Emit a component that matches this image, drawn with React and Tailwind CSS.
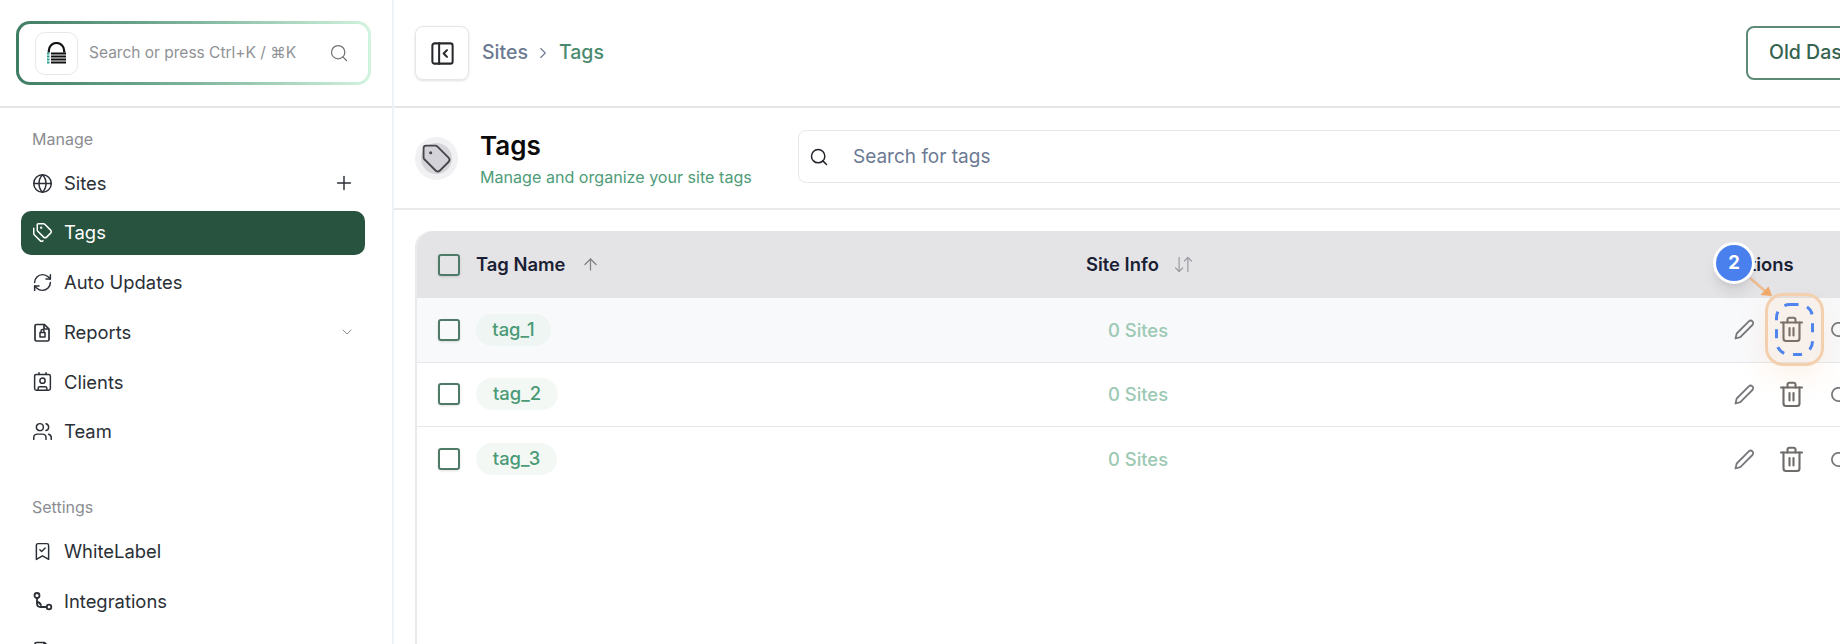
import React from "react";
import { Globe, Plus, Tags, RefreshCw, ChevronDown, Users, Search, ChevronRight, PanelLeftClose, Tag, ArrowUp, ArrowUpDown, Cloud, Contact, BookmarkCheck } from "lucide-react";

const font = { fontFamily: "Inter, sans-serif" };

function ReportIcon({ size = 21 }) {
  return (
    <svg width={size} height={size} viewBox="0 0 21 21" fill="none" stroke="currentColor" strokeWidth="1.7" strokeLinejoin="round">
      <path d="M4.5 2.5h8l4.5 4.5v10.5a1.5 1.5 0 0 1-1.5 1.5h-11A1.5 1.5 0 0 1 3 17.5v-13.500a1.500 1.500 0 0 1 1.500-1.500z" />
      <path d="M12 2.500v4.500h5" />
      <rect x="8" y="10.500" width="5" height="4.500" strokeWidth="1.500" />
      <path d="M9 10.500V9a1.500 1.500 0 0 1 3 0v1.500" strokeWidth="1.400" />
    </svg>
  );
}

function RouteIcon({ size = 21 }) {
  return (
    <svg width={size} height={size} viewBox="0 0 21 21" fill="none" stroke="currentColor" strokeWidth="1.8" strokeLinecap="round">
      <circle cx="5" cy="4.500" r="2.500" />
      <circle cx="17" cy="16" r="2.300" />
      <path d="M5 7v5.500c0 2.500 1.500 3.500 3.500 3.500h6" />
      <path d="M5 11c2 0 3 1 4 3" />
    </svg>
  );
}

function NavItem({ icon: Icon, label, active, right }) {
  return (
    <div className={`ml-[21px] mr-[27px] h-[44px] flex items-center pl-[11px] pr-[10px] gap-[11px] rounded-[10px] ${active ? "bg-[#27533f] text-white" : "text-[#2b2f36]"}`}>
      <Icon size={21} strokeWidth={1.7} />
      <span className="text-[18.4px] leading-none flex-1">{label}</span>
      {right}
    </div>
  );
}

function Logo() {
  return (
    <svg width="19" height="22" viewBox="0 0 19 22" fill="none">
      <path d="M1.800 10.500V8.700a7.700 7.700 0 0 1 15.400 0V10.500" stroke="#111" strokeWidth="2.200" />
      <path d="M4 11.500h15M4 14.500h15M4 17.500h15M4 20.500h15" stroke="#111" strokeWidth="2" />
      <path d="M0 11.500h2.500M0 14.500h2.500M0 17.500h2.500M0 20.500h2.500" stroke="#2a9d8f" strokeWidth="1.800" />
    </svg>
  );
}

function PencilIcon() {
  return (
    <svg width="23" height="23" viewBox="0 0 23 23" fill="none" stroke="currentColor" strokeWidth="1.800" strokeLinejoin="round">
      <path d="M2.500 20.500l1.200-5L15.800 3.400a2.400 2.400 0 0 1 3.600 3.600L7.300 19.200z" />
    </svg>
  );
}

function TrashIcon() {
  return (
    <svg width="25" height="27" viewBox="0 0 25 27" fill="none" stroke="currentColor" strokeWidth="2.100" strokeLinecap="round" strokeLinejoin="round">
      <path d="M2 6.500h21" />
      <path d="M8.500 6.500V3.500a1.800 1.800 0 0 1 1.800-1.800h4.400a1.800 1.800 0 0 1 1.800 1.800v3" />
      <path d="M4.500 6.500v16a2.500 2.500 0 0 0 2.500 2.500h11a2.500 2.500 0 0 0 2.500-2.500v-16" />
      <path d="M10.500 12v7.500M14.500 12v7.500" />
    </svg>
  );
}

function Row({ label, shaded, width, last }) {
  return (
    <div className={`h-[64.5px] flex items-center pl-[21px] ${last ? "" : "border-b border-[#e5e7eb]"} ${shaded ? "bg-[#f8f9fb]" : "bg-white"}`}>
      <div className="w-[22px] h-[22px] shrink-0 rounded-[3px] border-2 border-[#4f7a68] shadow-sm" />
      <div className="ml-[16px] w-[632px] shrink-0">
        <span className={`inline-flex items-center justify-center h-[32px] rounded-full text-[18.4px] font-medium text-[#4a9a76] ${shaded ? "bg-[#eef5f2]" : "bg-[#f3f8f5]"} ${width}`}>{label}</span>
      </div>
      <span className="w-[625px] shrink-0 pt-[2px] text-[18.4px] text-[#9cc9b3] font-medium">0 Sites</span>
      <div className="flex items-center gap-[23px] text-[#77787c]">
        <PencilIcon />
        <span className="text-[#6f6b69]"><TrashIcon /></span>
        <Cloud size={23} strokeWidth={1.8} className="ml-[3px]" />
      </div>
    </div>
  );
}

export default function App() {
  return (
    <div style={font} className="w-[1840px] h-[644px] overflow-hidden flex bg-white relative">
      <aside className="w-[394px] shrink-0 border-r-2 border-[#eef1f6] flex flex-col">
        <div className="h-[108px] shrink-0 border-b-2 border-[#e5e5e7] flex items-center pl-[16px]">
          <div className="w-[355px] h-[64px] rounded-[14px] p-[3px] bg-gradient-to-r from-[#3f7d63] via-[#7fb59c] to-[#d2f3df]">
            <div className="w-full h-full rounded-[11px] bg-white flex items-center pl-[16px] pr-[19px]">
              <div className="w-[43px] h-[43px] rounded-[10px] border border-[#e8e8ea] flex items-center justify-center shrink-0">
                <Logo />
              </div>
              <span className="ml-[11px] flex-1 text-[15.5px] text-[#8f9295] whitespace-nowrap">Search or press Ctrl+K / ⌘K</span>
              <Search size={20} strokeWidth={1.5} className="text-[#6f7276]" />
            </div>
          </div>
        </div>
        <div className="pt-[21px] text-[#8b8d91] text-[16px] pl-[32px] leading-[20px] mb-[12px]">Manage</div>
        <div className="flex flex-col gap-[5.700px]">
          <NavItem icon={Globe} label="Sites" right={<Plus size={22} strokeWidth={1.6} />} />
          <NavItem icon={Tags} label="Tags" active />
          <NavItem icon={RefreshCw} label="Auto Updates" />
          <NavItem icon={ReportIcon} label="Reports" right={<ChevronDown size={16} strokeWidth={1.5} className="text-[#8b8d91] mr-0" />} />
          <NavItem icon={Contact} label="Clients" />
          <NavItem icon={Users} label="Team" />
        </div>
        <div className="pt-[43.500px] text-[#8b8d91] text-[16px] pl-[32px] leading-[20px] mb-[12.500px]">Settings</div>
        <div className="flex flex-col gap-[5.700px]">
          <NavItem icon={BookmarkCheck} label="WhiteLabel" />
          <NavItem icon={RouteIcon} label="Integrations" />
          <NavItem icon={ReportIcon} label="Service Desk" />
        </div>
      </aside>

      <main className="flex-1 min-w-0 overflow-hidden flex flex-col">
        <header className="h-[108px] shrink-0 border-b-2 border-[#e5e5e7] flex items-center pl-[21px]">
          <div className="w-[1331px] shrink-0 flex items-center">
            <div className="w-[54px] h-[54px] shrink-0 rounded-[8px] border border-[#e6e6e8] shadow-sm flex items-center justify-center text-[#27282b]">
              <PanelLeftClose size={27} strokeWidth={1.8} />
            </div>
            <span className="ml-[13px] text-[19.5px] font-medium text-[#6c7a93]">Sites</span>
            <ChevronRight size={18} strokeWidth={1.5} className="mx-[6.500px] shrink-0 text-[#6c7a93]" />
            <span className="text-[19.5px] font-medium text-[#4a8a6e]">Tags</span>
          </div>
          <div className="shrink-0 w-[200px] h-[54px] rounded-[8px] border-2 border-[#5d8a77] flex items-center pl-[21px] text-[19.5px] font-medium text-[#35634f] whitespace-nowrap">Old Dashboard</div>
        </header>

        <section className="h-[102px] shrink-0 border-b-2 border-[#e9eaec] flex items-center pl-[21px]">
          <div className="w-[43px] h-[43px] shrink-0 rounded-full bg-[#f1f1f3] flex items-center justify-center">
            <div className="w-[31px] h-[31px] rounded-full bg-[#d6d6da] flex items-center justify-center">
              <Tag size={31} strokeWidth={1.4} fill="#d2d2d8" className="text-[#45454a]" />
            </div>
          </div>
          <div className="ml-[22px] w-[318px] shrink-0">
            <div className="text-[26px] font-semibold text-[#0a0a0b] leading-[32px]">Tags</div>
            <div className="text-[16.100px] text-[#4e9c78] leading-[20px] mt-[5px] whitespace-nowrap">Manage and organize your site tags</div>
          </div>
          <div className="w-[1100px] shrink-0 h-[53px] mb-[3px] rounded-[8px] border border-[#e6e8ee] flex items-center pl-[10px]">
            <Search size={20} strokeWidth={1.8} className="text-[#23252b]" />
            <span className="ml-[24px] pt-[1px] text-[19px] text-[#6c7a93]">Search for tags</span>
          </div>
        </section>

        <div className="pl-[21px] pt-[21px]">
          <div className="w-[1500px] border-l-2 border-[#e9eaec] rounded-t-[16px] min-h-[420px]">
            <div className="h-[67px] bg-[#e4e4e7] rounded-t-[16px] flex items-center pl-[21px] text-[18.4px] font-semibold text-[#1a2033]">
              <div className="w-[22px] h-[22px] shrink-0 rounded-[3px] border-2 border-[#4f7a68] shadow-sm" />
              <div className="ml-[16px] w-[610px] shrink-0 flex items-center">
                <span>Tag Name</span>
                <ArrowUp size={19} strokeWidth={1.5} className="ml-[16px] text-[#7e7f84]" />
              </div>
              <div className="w-[640px] shrink-0 flex items-center">
                <span>Site Info</span>
                <ArrowUpDown size={21} strokeWidth={1.4} className="ml-[14px] text-[#9a9ba0] -scale-x-100" />
              </div>
              <span>Actions</span>
            </div>
            <Row label="tag_1" shaded width="w-[75px]" />
            <Row label="tag_2" width="w-[82px]" />
            <Row label="tag_3" width="w-[81px]" last />
          </div>
        </div>
      </main>

      <div className="absolute left-[1765px] top-[293px] w-[59px] h-[73px] rounded-[18px] border-[3px] border-[#f3cfae] bg-[#f4a261]/10 shadow-[0_10px_28px_rgba(244,162,97,0.14)]" />
      <svg className="absolute left-[1765px] top-[293px]" width="59" height="73" viewBox="0 0 59 73" fill="none">
        <rect x="11.500" y="11.500" width="36" height="50" rx="13" stroke="#4f83ee" strokeWidth="3" strokeDasharray="9 9" />
      </svg>
      <svg className="absolute left-[1740px] top-[270px]" width="40" height="40" viewBox="0 0 40 40" fill="none">
        <path d="M10 8L25 21" stroke="#efbd92" strokeWidth="2.500" />
        <path d="M32 26L20.500 25L28.500 16.500Z" fill="#f0a868" />
      </svg>
      <div className="absolute left-[1713px] top-[242px] w-[42px] h-[42px] rounded-full bg-[#4a7fee] border-[3px] border-white shadow-lg flex items-center justify-center text-white font-bold text-[18.4px]">2</div>
    </div>
  );
}
